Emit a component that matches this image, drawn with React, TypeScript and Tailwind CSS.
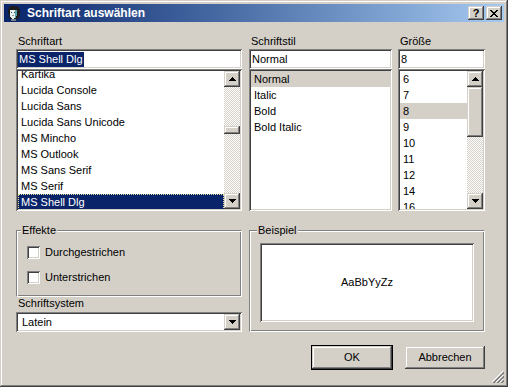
import React from 'react';

const raised =
  'shadow-[inset_-1px_-1px_#404040,inset_1px_1px_#d4d0c8,inset_-2px_-2px_#808080,inset_2px_2px_#ffffff]';
const sunken =
  'shadow-[inset_1px_1px_#808080,inset_-1px_-1px_#ffffff,inset_2px_2px_#404040,inset_-2px_-2px_#d4d0c8]';
const dither =
  'bg-[repeating-conic-gradient(#ffffff_0%_25%,#d4d0c8_0%_50%)] bg-size-[2px_2px]';

const fonts = [
  'Kartika',
  'Lucida Console',
  'Lucida Sans',
  'Lucida Sans Unicode',
  'MS Mincho',
  'MS Outlook',
  'MS Sans Serif',
  'MS Serif',
  'MS Shell Dlg',
];
const styles = ['Normal', 'Italic', 'Bold', 'Bold Italic'];
const sizes = ['6', '7', '8', '9', '10', '11', '12', '14', '16'];

const Arrow: React.FC<{ down?: boolean }> = ({ down }) => (
  <svg width="7" height="4" viewBox="0 0 7 4" shapeRendering="crispEdges" className={down ? 'rotate-180' : ''}>
    <rect x="3" y="0" width="1" height="1" fill="#000" />
    <rect x="2" y="1" width="3" height="1" fill="#000" />
    <rect x="1" y="2" width="5" height="1" fill="#000" />
    <rect x="0" y="3" width="7" height="1" fill="#000" />
  </svg>
);

const ScrollButton: React.FC<{ down?: boolean }> = ({ down }) => (
  <div className={`w-[16px] h-[16px] shrink-0 bg-[#d4d0c8] flex items-center justify-center ${raised}`}>
    <Arrow down={down} />
  </div>
);

const ScrollBar: React.FC<{ thumbTop: number; thumbHeight: string }> = ({ thumbTop, thumbHeight }) => (
  <div className="w-[16px] h-full flex flex-col shrink-0">
    <ScrollButton />
    <div className="flex-1 flex flex-col">
      <div className={dither} style={{ height: thumbTop }} />
      <div className={`bg-[#d4d0c8] w-[16px] ${thumbHeight} ${raised}`} />
      <div className={`flex-1 ${dither}`} />
    </div>
    <ScrollButton down />
  </div>
);

const Label: React.FC<{ children: React.ReactNode }> = ({ children }) => (
  <div className="h-[13px] leading-[13px] pl-[2px]">{children}</div>
);

const Checkbox: React.FC<{ label: string; className?: string }> = ({ label, className }) => (
  <div className={`flex items-center h-[13px] pl-[10px] ${className ?? ''}`}>
    <div className={`w-[13px] h-[13px] bg-white ${sunken}`} />
    <span className="ml-[5px]">{label}</span>
  </div>
);

export default function App() {
  return (
    <div
      className={`relative w-[508px] h-[387px] bg-[#d4d0c8] p-[4px] text-[11px] text-black font-['Liberation_Sans',Arial,sans-serif] ${raised}`}
    >
      {/* title bar */}
      <div className="h-[18px] flex items-center bg-gradient-to-r from-[#0a246a] to-[#a6caf0]">
        <svg width="14" height="16" viewBox="0 0 14 16" className="ml-[3px] shrink-0" shapeRendering="crispEdges">
          <path d="M3 1h7v1h2v2h1v7h-1v2h-1v1H9v2H4v-2H3v-1H2V9H1V4h1V2h1z" fill="#1c1c1c" />
          <path d="M3 5h5v1h1v5H8v2H7v1H5v-1H4v-1H3z" fill="#e4f0f0" />
          <path d="M8 5h2v6H9v2H8V6z" fill="#58a0a8" />
          <rect x="4" y="7" width="1" height="1" fill="#404848" />
          <rect x="7" y="7" width="1" height="1" fill="#404848" />
          <rect x="5" y="10" width="2" height="1" fill="#909898" />
          <rect x="4" y="14" width="5" height="2" fill="#708088" />
        </svg>
        <span className="ml-[6px] text-white font-bold text-[12px] leading-[18px]">Schriftart auswählen</span>
        <div className="ml-auto flex mr-[2px] gap-[2px]">
          <div className={`w-[16px] h-[14px] bg-[#d4d0c8] flex items-center justify-center font-bold text-[11px] leading-[14px] ${raised}`}>
            ?
          </div>
          <div className={`w-[16px] h-[14px] bg-[#d4d0c8] flex items-center justify-center ${raised}`}>
            <svg width="8" height="7" viewBox="0 0 8 7" shapeRendering="crispEdges">
              <path d="M0 0h2v1h1v1h2V1h1V0h2v1H7v1H6v1H5v1h1v1h1v1h1v1H6V6H5V5H3v1H2v1H0V6h1V5h1V4h1V3H2V2H1V1H0z" fill="#000" />
            </svg>
          </div>
        </div>
      </div>

      {/* client */}
      <div className="pl-[12px] pr-[19px]">
        <div className="flex pt-[13px]">
          <div className="w-[226px]">
            <Label>Schriftart</Label>
            <div className={`mt-[1px] h-[20px] bg-white p-[2px] flex items-center ${sunken}`}>
              <span className="bg-[#0a246a] text-white px-[1px] leading-[15px]">MS Shell Dlg</span>
            </div>
            <div className={`h-[142px] bg-white p-[2px] flex ${sunken}`}>
              <div className="flex-1 overflow-hidden">
                <div className="-mt-[5px]">
                  {fonts.map((f) => (
                    <div
                      key={f}
                      className={`h-[16px] leading-[16px] pl-[3px] ${
                        f === 'MS Shell Dlg'
                          ? 'bg-[#0a246a] text-white outline-1 outline-dotted outline-[#e8e0a0] -outline-offset-1'
                          : ''
                      }`}
                    >
                      {f}
                    </div>
                  ))}
                </div>
              </div>
              <ScrollBar thumbTop={39} thumbHeight="h-[8px]" />
            </div>
          </div>

          <div className="w-[143px] ml-[7px]">
            <Label>Schriftstil</Label>
            <div className={`mt-[1px] h-[20px] bg-white p-[2px] pl-[3px] flex items-center ${sunken}`}>Normal</div>
            <div className={`h-[142px] bg-white p-[2px] ${sunken}`}>
              {styles.map((s, i) => (
                <div key={s} className={`h-[16px] leading-[16px] pl-[3px] ${i === 0 ? 'bg-[#d4d0c8]' : ''}`}>
                  {s}
                </div>
              ))}
            </div>
          </div>

          <div className="w-[87px] ml-[6px]">
            <Label>Größe</Label>
            <div className={`mt-[1px] h-[20px] bg-white p-[2px] pl-[3px] flex items-center ${sunken}`}>8</div>
            <div className={`h-[142px] bg-white p-[2px] flex ${sunken}`}>
              <div className="flex-1 overflow-hidden">
                {sizes.map((s) => (
                  <div key={s} className={`h-[16px] leading-[16px] pl-[3px] ${s === '8' ? 'bg-[#d4d0c8]' : ''}`}>
                    {s}
                  </div>
                ))}
              </div>
              <ScrollBar thumbTop={0} thumbHeight="h-[50px]" />
            </div>
          </div>
        </div>

        <div className="flex mt-[19px]">
          <div className="w-[226px] shrink-0">
            <div className="relative h-[67px] border-t border-l border-t-[#808080] border-l-[#808080] border-r border-b border-r-white border-b-white shadow-[inset_1px_1px_#ffffff,inset_-1px_-1px_#808080]">
              <span className="absolute -top-[7px] left-[4px] bg-[#d4d0c8] px-[1px] leading-[13px]">Effekte</span>
              <Checkbox label="Durchgestrichen" className="mt-[15px]" />
              <Checkbox label="Unterstrichen" className="mt-[12px]" />
            </div>
            <Label>Schriftsystem</Label>
            <div className={`mt-[2px] h-[20px] bg-white p-[2px] flex items-center ${sunken}`}>
              <span className="pl-[4px] flex-1">Latein</span>
              <ScrollButton down />
            </div>
          </div>

          <div className="ml-[7px] w-[236px] h-[102px] shrink-0 relative border-t border-l border-t-[#808080] border-l-[#808080] border-r border-b border-r-white border-b-white shadow-[inset_1px_1px_#ffffff,inset_-1px_-1px_#808080] pl-[10px] pt-[12px] pr-[10px]">
            <span className="absolute -top-[7px] left-[7px] bg-[#d4d0c8] px-[1px] leading-[13px]">Beispiel</span>
            <div className={`h-[79px] bg-white flex items-center justify-center ${sunken}`}>AaBbYyZz</div>
          </div>
        </div>

        <div className="flex justify-end mt-[13px]">
          <div className="w-[82px] h-[25px] border border-black">
            <div className={`h-full bg-[#d4d0c8] flex items-center justify-center ${raised}`}>OK</div>
          </div>
          <div className={`ml-[12px] mt-[1px] w-[80px] h-[23px] bg-[#d4d0c8] flex items-center justify-center ${raised}`}>
            Abbrechen
          </div>
        </div>
      </div>

      {/* size grip */}
      <svg width="12" height="12" viewBox="0 0 12 12" className="absolute right-[4px] bottom-[4px]" shapeRendering="crispEdges">
        <path d="M11 0L0 11M11 4L4 11M11 8L8 11" stroke="#ffffff" strokeWidth="1" />
        <path d="M12 1L1 12M12 2L2 12M12 5L5 12M12 6L6 12M12 9L9 12M12 10L10 12" stroke="#808080" strokeWidth="1" />
      </svg>
    </div>
  );
}
